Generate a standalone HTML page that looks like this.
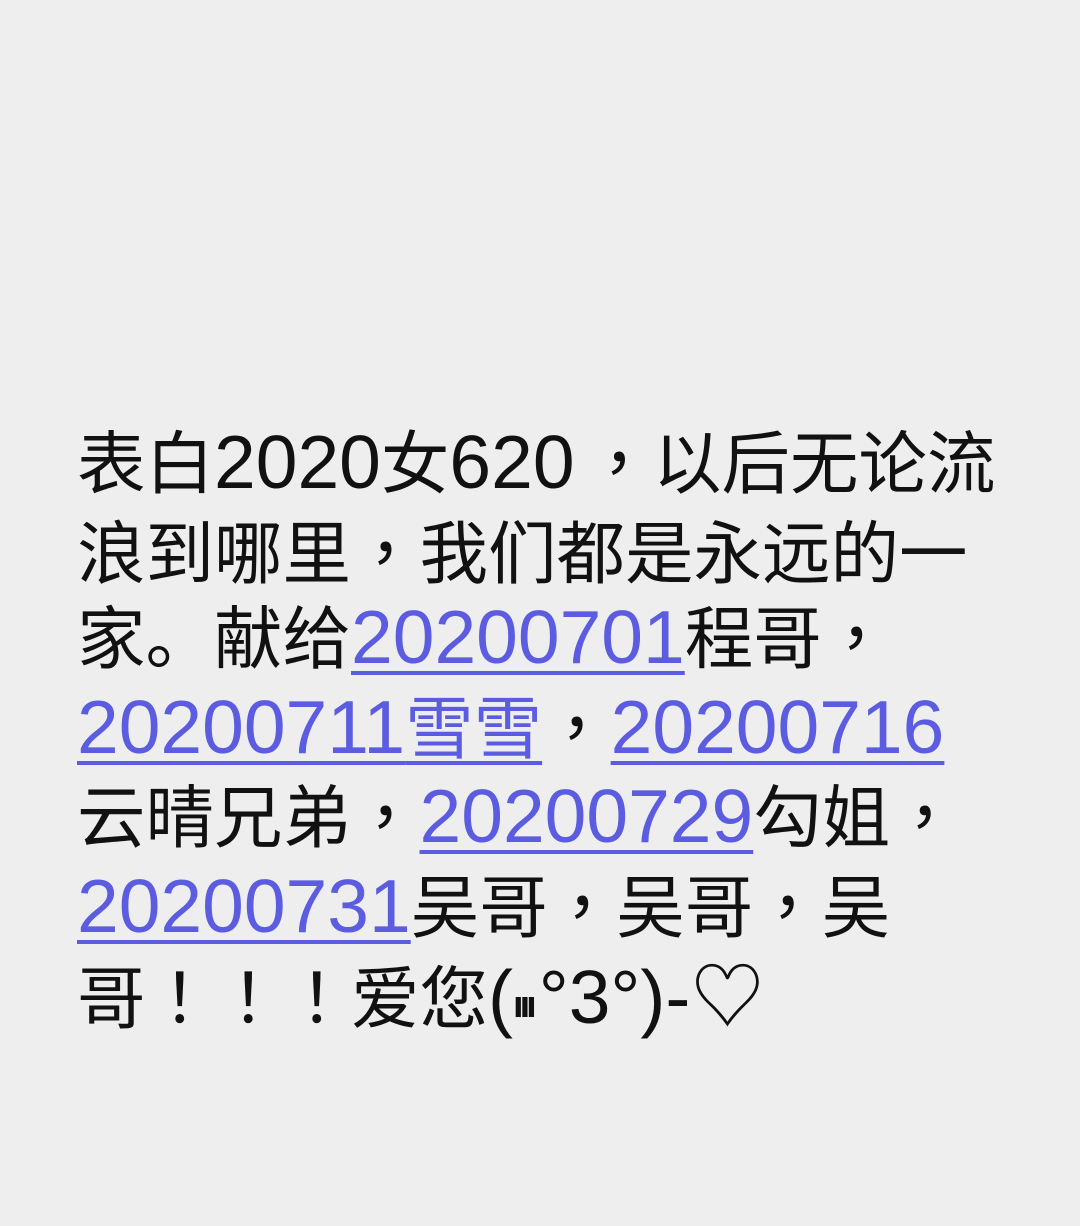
<!DOCTYPE html>
<html><head><meta charset="utf-8"><style>
html,body{margin:0;padding:0;}
body{width:1080px;height:1226px;background:#eeeeee;overflow:hidden;position:relative;}
.t{position:absolute;left:77px;top:416px;width:1000px;font-family:"Noto Sans CJK SC","WenQuanYi Zen Hei",sans-serif;font-size:68.5px;line-height:85.5px;color:#111;white-space:nowrap;}
.d{font-family:"Liberation Sans",sans-serif;font-size:75px;}
.c{font-family:"Noto Sans CJK TC",sans-serif;}
.e{font-family:"Liberation Sans",sans-serif;font-size:38px;font-weight:bold;letter-spacing:-4px;vertical-align:6px;margin-right:6px;}
a{color:#5b5ce0;text-decoration:underline;text-decoration-thickness:4px;text-underline-offset:8px;}
</style></head><body>
<div class="t">
表白<span class="d">2020</span>女<span class="d">620</span><span class="c" style="margin-left:10px">，</span>以后无论流<br>
浪到哪里<span class="c">，</span>我们都是永远的一<br>
家。献给<a class="d">20200701</a>程哥<span class="c">，</span><br>
<a><span class="d">20200711</span>雪雪</a><span class="c">，</span><a class="d">20200716</a><br>
云晴兄弟<span class="c">，</span><a class="d">20200729</a>勾姐<span class="c">，</span><br>
<a class="d">20200731</a>吴哥<span class="c">，</span>吴哥<span class="c">，</span>吴<br>
哥<span class="c">！！！</span>爱您<span class="d">(<span class="e">ııı</span>°3°)-</span><span style="font-size:74px">♡</span>
</div>
</body></html>
